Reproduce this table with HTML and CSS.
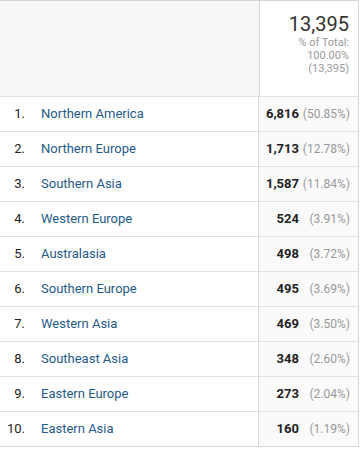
FILE: index.html
```html
<!DOCTYPE html>
<html>
<head>
<meta charset="utf-8">
<link rel="stylesheet" href="styles.css">
</head>
<body>
<div class="table">
  <div class="head">
    <div class="head-left"></div>
    <div class="head-right">
      <div class="total">13,395</div>
      <div class="sub">% of Total:<br>100.00%<br>(13,395)</div>
    </div>
  </div>
  <div class="row"><div class="left"><span class="idx">1.</span><span class="name">Northern America</span></div><div class="right"><span class="val">6,816</span><span class="pct">(50.85%)</span></div></div>
  <div class="row"><div class="left"><span class="idx">2.</span><span class="name">Northern Europe</span></div><div class="right"><span class="val">1,713</span><span class="pct">(12.78%)</span></div></div>
  <div class="row"><div class="left"><span class="idx">3.</span><span class="name">Southern Asia</span></div><div class="right"><span class="val">1,587</span><span class="pct">(11.84%)</span></div></div>
  <div class="row"><div class="left"><span class="idx">4.</span><span class="name">Western Europe</span></div><div class="right"><span class="val">524</span><span class="pct">(3.91%)</span></div></div>
  <div class="row"><div class="left"><span class="idx">5.</span><span class="name">Australasia</span></div><div class="right"><span class="val">498</span><span class="pct">(3.72%)</span></div></div>
  <div class="row"><div class="left"><span class="idx">6.</span><span class="name">Southern Europe</span></div><div class="right"><span class="val">495</span><span class="pct">(3.69%)</span></div></div>
  <div class="row"><div class="left"><span class="idx">7.</span><span class="name">Western Asia</span></div><div class="right"><span class="val">469</span><span class="pct">(3.50%)</span></div></div>
  <div class="row"><div class="left"><span class="idx">8.</span><span class="name">Southeast Asia</span></div><div class="right"><span class="val">348</span><span class="pct">(2.60%)</span></div></div>
  <div class="row"><div class="left"><span class="idx">9.</span><span class="name">Eastern Europe</span></div><div class="right"><span class="val">273</span><span class="pct">(2.04%)</span></div></div>
  <div class="row"><div class="left"><span class="idx">10.</span><span class="name">Eastern Asia</span></div><div class="right"><span class="val">160</span><span class="pct">(1.19%)</span></div></div>
</div>
</body>
</html>
```
FILE: styles.css
```css
html, body { margin: 0; padding: 0; background: #fff; }
body { font-family: Roboto, "Liberation Sans", Arial, sans-serif; }
.table {
  width: 358px;
  border-top: 1px solid #d6d6d6;
  border-right: 1px solid #d6d6d6;
  border-bottom: 1px solid #d6d6d6;
}
.head { display: flex; height: 95px; border-bottom: 1px solid #e2e2e2; }
.head-left { width: 259px; background: #f6f6f6; border-right: 1px solid #d6d6d6; }
.head-right { flex: 1; background: #fff; text-align: right; padding: 11px 9px 0 0; }
.total { font-size: 20px; color: #333; line-height: 24px; font-weight: 400; }
.sub { font-size: 11px; color: #999; line-height: 13px; }
.row { display: flex; height: 34px; border-bottom: 1px solid #e2e2e2; }
.row:last-child { border-bottom: none; }
.left { width: 259px; display: flex; align-items: center; padding-bottom: 1px; box-sizing: border-box; border-right: 1px solid #d6d6d6; font-size: 13px; }
.idx { width: 25px; text-align: right; color: #222; }
.name { margin-left: 16px; color: #1f5a88; }
.right { flex: 1; display: flex; align-items: center; justify-content: flex-end; padding: 0 8px 1px 0; background: #fafafa; font-size: 13px; }
.val { font-weight: 700; color: #222; }
.pct { width: 51px; text-align: right; color: #999; font-size: 12px; }
```
